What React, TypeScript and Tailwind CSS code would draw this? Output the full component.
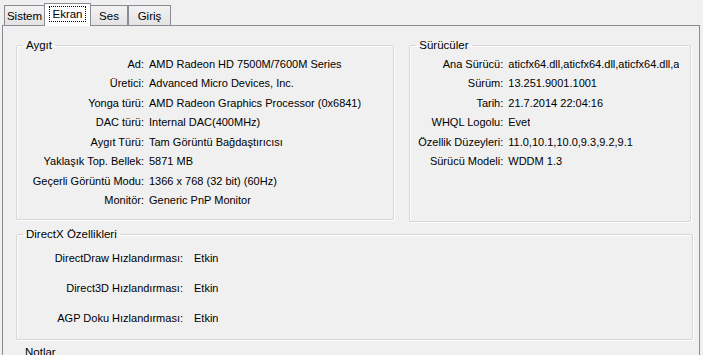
import React from "react";

const font = { fontFamily: '"Liberation Sans", Arial, sans-serif' };

function Tab({ label, selected, w }: { label: string; selected?: boolean; w: string }) {
  if (selected) {
    return (
      <div className={`relative z-10 -mb-[1px] -mx-[1px] h-[23px] ${w} border border-b-0 border-[#898c95] bg-white flex items-start justify-center pt-[2px]`}>
        <span className="px-[2px] leading-[14px] border border-dotted border-black">{label}</span>
      </div>
    );
  }
  return (
    <div className={`h-[20px] ${w} border border-b-0 border-[#898c95] bg-gradient-to-b from-[#f2f2f2] to-[#e3e3e3] flex items-start justify-center pt-[3px] leading-[14px]`}>
      {label}
    </div>
  );
}

function Group({ title, className, children }: { title: string; className?: string; children: React.ReactNode }) {
  return (
    <fieldset className={`border border-[#d5d5d5] shadow-[inset_1px_1px_0_#ffffff,1px_1px_0_#ffffff] rounded-[2px] px-0 m-0 min-w-0 ${className ?? ""}`}>
      <legend className="ml-[6px] px-[3px] leading-[14px] text-[11.5px]">{title}</legend>
      {children}
    </fieldset>
  );
}

function Rows({ rows, labelW, gap, rowH }: { rows: [string, string][]; labelW: string; gap: string; rowH: string }) {
  return (
    <div className="flex flex-col">
      {rows.map(([k, v]) => (
        <div key={k} className={`flex ${rowH} items-center whitespace-nowrap`}>
          <div className={`${labelW} text-right shrink-0`}>{k}</div>
          <div className={`${gap} overflow-hidden`}>{v}</div>
        </div>
      ))}
    </div>
  );
}

export default function App() {
  return (
    <div className="w-[703px] h-[355px] overflow-hidden bg-[#f0f0f0] text-[11px] text-black pt-[3px] pl-[3px]" style={font}>
      <div className="flex items-end h-[22px] pl-[1px] text-[11.5px]">
        <Tab label="Sistem" w="w-[41px]" />
        <Tab label="Ekran" selected w="w-[47px]" />
        <Tab label="Ses" w="w-[38px]" />
        <Tab label="Giriş" w="w-[43px]" />
      </div>
      <div className="w-[698px] h-[340px] -ml-[1px] border border-[#898c95] border-b-0 bg-[#f0f0f0] pl-[13px] pt-[12px] pr-[8px]">
        <div className="flex gap-[15px]">
          <Group title="Aygıt" className="w-[380px] h-[182px]">
            <div className="pt-[2px]">
              <Rows
                labelW="w-[127px]"
                gap="pl-[5px]"
                rowH="h-[19.5px]"
                rows={[
                  ["Ad:", "AMD Radeon HD 7500M/7600M Series"],
                  ["Üretici:", "Advanced Micro Devices, Inc."],
                  ["Yonga türü:", "AMD Radeon Graphics Processor (0x6841)"],
                  ["DAC türü:", "Internal DAC(400MHz)"],
                  ["Aygıt Türü:", "Tam Görüntü Bağdaştırıcısı"],
                  ["Yaklaşık Top. Bellek:", "5871 MB"],
                  ["Geçerli Görüntü Modu:", "1366 x 768 (32 bit) (60Hz)"],
                  ["Monitör:", "Generic PnP Monitor"],
                ]}
              />
            </div>
          </Group>
          <Group title="Sürücüler" className="w-[283px] h-[184px]">
            <div className="pt-[2px]">
              <Rows
                labelW="w-[93px]"
                gap="pl-[5px]"
                rowH="h-[19.5px]"
                rows={[
                  ["Ana Sürücü:", "aticfx64.dll,aticfx64.dll,aticfx64.dll,a"],
                  ["Sürüm:", "13.251.9001.1001"],
                  ["Tarih:", "21.7.2014 22:04:16"],
                  ["WHQL Logolu:", "Evet"],
                  ["Özellik Düzeyleri:", "11.0,10.1,10.0,9.3,9.2,9.1"],
                  ["Sürücü Modeli:", "WDDM 1.3"],
                ]}
              />
            </div>
          </Group>
        </div>
        <Group title="DirectX Özellikleri" className="w-[677px] h-[113px] mt-[5px]">
          <div className="pt-[2px]">
            <Rows
              labelW="w-[166px]"
              gap="pl-[11px]"
              rowH="h-[30px]"
              rows={[
                ["DirectDraw Hızlandırması:", "Etkin"],
                ["Direct3D Hızlandırması:", "Etkin"],
                ["AGP Doku Hızlandırması:", "Etkin"],
              ]}
            />
          </div>
        </Group>
        <div className="mt-[5px] ml-[9px] leading-[14px] text-[11.5px]">Notlar</div>
      </div>
    </div>
  );
}
